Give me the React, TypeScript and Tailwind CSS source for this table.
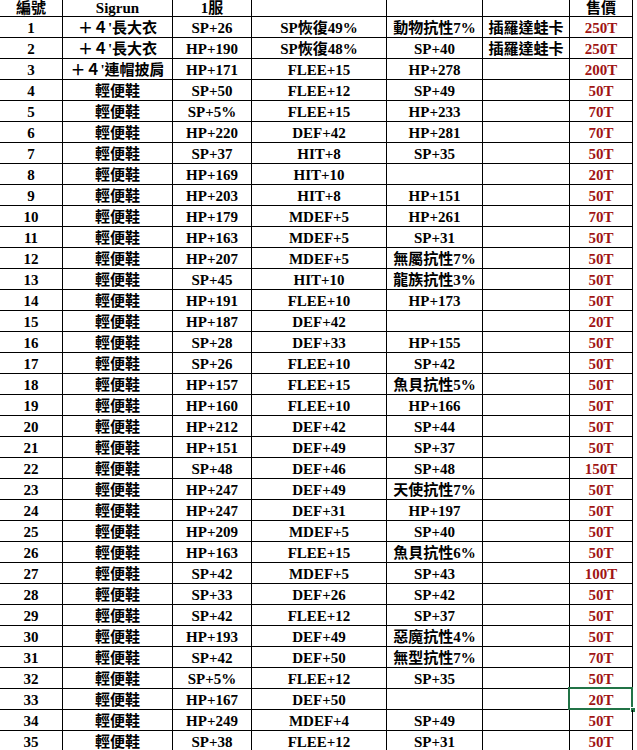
import React from 'react'

type Row = [string, string, string, string, string, string]

const SHOE = '輕便鞋'

const rows: Row[] = [
  ['＋４\'長大衣', 'SP+26', 'SP恢復49%', '動物抗性7%', '插羅達蛙卡', '250T'],
  ['＋４\'長大衣', 'HP+190', 'SP恢復48%', 'SP+40', '插羅達蛙卡', '250T'],
  ['＋４\'連帽披肩', 'HP+171', 'FLEE+15', 'HP+278', '', '200T'],
  [SHOE, 'SP+50', 'FLEE+12', 'SP+49', '', '50T'],
  [SHOE, 'SP+5%', 'FLEE+15', 'HP+233', '', '70T'],
  [SHOE, 'HP+220', 'DEF+42', 'HP+281', '', '70T'],
  [SHOE, 'SP+37', 'HIT+8', 'SP+35', '', '50T'],
  [SHOE, 'HP+169', 'HIT+10', '', '', '20T'],
  [SHOE, 'HP+203', 'HIT+8', 'HP+151', '', '50T'],
  [SHOE, 'HP+179', 'MDEF+5', 'HP+261', '', '70T'],
  [SHOE, 'HP+163', 'MDEF+5', 'SP+31', '', '50T'],
  [SHOE, 'HP+207', 'MDEF+5', '無屬抗性7%', '', '50T'],
  [SHOE, 'SP+45', 'HIT+10', '龍族抗性3%', '', '50T'],
  [SHOE, 'HP+191', 'FLEE+10', 'HP+173', '', '50T'],
  [SHOE, 'HP+187', 'DEF+42', '', '', '20T'],
  [SHOE, 'SP+28', 'DEF+33', 'HP+155', '', '50T'],
  [SHOE, 'SP+26', 'FLEE+10', 'SP+42', '', '50T'],
  [SHOE, 'HP+157', 'FLEE+15', '魚貝抗性5%', '', '50T'],
  [SHOE, 'HP+160', 'FLEE+10', 'HP+166', '', '50T'],
  [SHOE, 'HP+212', 'DEF+42', 'SP+44', '', '50T'],
  [SHOE, 'HP+151', 'DEF+49', 'SP+37', '', '50T'],
  [SHOE, 'SP+48', 'DEF+46', 'SP+48', '', '150T'],
  [SHOE, 'HP+247', 'DEF+49', '天使抗性7%', '', '50T'],
  [SHOE, 'HP+247', 'DEF+31', 'HP+197', '', '50T'],
  [SHOE, 'HP+209', 'MDEF+5', 'SP+40', '', '50T'],
  [SHOE, 'HP+163', 'FLEE+15', '魚貝抗性6%', '', '50T'],
  [SHOE, 'SP+42', 'MDEF+5', 'SP+43', '', '100T'],
  [SHOE, 'SP+33', 'DEF+26', 'SP+42', '', '50T'],
  [SHOE, 'SP+42', 'FLEE+12', 'SP+37', '', '50T'],
  [SHOE, 'HP+193', 'DEF+49', '惡魔抗性4%', '', '50T'],
  [SHOE, 'SP+42', 'DEF+50', '無型抗性7%', '', '70T'],
  [SHOE, 'SP+5%', 'FLEE+12', 'SP+35', '', '50T'],
  [SHOE, 'HP+167', 'DEF+50', '', '', '20T'],
  [SHOE, 'HP+249', 'MDEF+4', 'SP+49', '', '50T'],
  [SHOE, 'SP+38', 'FLEE+12', 'SP+31', '', '50T'],
]

const cell = 'flex items-center justify-center whitespace-nowrap border-r border-b border-black overflow-hidden'

export default function App() {
  return (
    <div className="h-[750px] w-[637px] overflow-hidden bg-white font-['Liberation_Serif','Noto_Sans_CJK_TC',serif] text-[15px] font-bold text-black">
      <div className="grid w-[633px] grid-cols-[63px_110px_79px_135px_96px_87px_63px]">
        {/* header row, top part scrolled away */}
        <div className={`${cell} h-[17px] pt-[1px] leading-[15px]`}>編號</div>
        <div className={`${cell} h-[17px] pt-[1px] leading-[15px]`}>Sigrun</div>
        <div className={`${cell} h-[17px] pt-[1px] leading-[15px]`}>1服</div>
        <div className={`${cell} h-[17px]`}></div>
        <div className={`${cell} h-[17px]`}></div>
        <div className={`${cell} h-[17px]`}></div>
        <div className={`${cell} h-[17px] pt-[1px] leading-[15px]`}>售價</div>

        {rows.map((r, i) => {
          const selected = i === 32
          return (
            <React.Fragment key={i}>
              <div className={`${cell} h-[21px] pt-[2px]`}>{i + 1}</div>
              <div className={`${cell} h-[21px] pt-[2px]`}>{r[0]}</div>
              <div className={`${cell} h-[21px] pt-[2px]`}>{r[1]}</div>
              <div className={`${cell} h-[21px] pt-[2px]`}>{r[2]}</div>
              <div className={`${cell} h-[21px] pt-[2px]`}>{r[3]}</div>
              <div className={`${cell} h-[21px] pt-[2px]`}>{r[4]}</div>
              <div className={`${cell} relative h-[21px] pt-[2px] !overflow-visible text-[#a01414]`}>
                {r[5]}
                {selected && (
                  <>
                    <div className="absolute -top-[2px] -left-[2px] -right-[1px] -bottom-[1px] border-2 border-[#217346]"></div>
                    <div className="absolute -right-[4px] -bottom-[4px] h-[6px] w-[6px] border border-white bg-[#217346]"></div>
                  </>
                )}
              </div>
            </React.Fragment>
          )
        })}
      </div>
    </div>
  )
}
